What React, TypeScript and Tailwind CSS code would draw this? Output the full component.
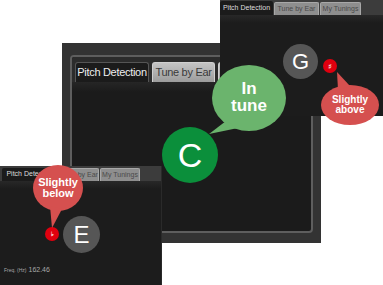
const font = { fontFamily: '"Liberation Sans", Arial, sans-serif' };

const Tab = ({ label, active, className }: any) => (
  <div
    className={
      active
        ? `flex items-center justify-center whitespace-nowrap tracking-[-0.3px] rounded-t-[3px] bg-[#1b1b1b] text-[#eeeeee] border border-b-0 border-[#555] ${className}`
        : `flex items-center justify-center whitespace-nowrap tracking-[-0.3px] rounded-t-[3px] bg-gradient-to-b from-[#c4c4c4] to-[#9c9c9c] text-[#3a3a3a] border border-b-0 border-[#d0d0d0] ${className}`
    }
  >
    {label}
  </div>
);

const SmallTab = ({ label, active, className }: any) => (
  <div
    className={
      active
        ? `flex items-center justify-center whitespace-nowrap rounded-t-[2px] bg-[#1b1b1b] text-[#dddddd] ${className}`
        : `flex items-center justify-center whitespace-nowrap rounded-t-[2px] bg-[#8e8e8e] text-[#4a4a4a] border border-b-0 border-[#a8a8a8] ${className}`
    }
  >
    {label}
  </div>
);

const MiddleWindow = () => (
  <div className="absolute left-[62px] top-[43px] w-[259px] h-[200px] bg-[#333333] pt-[12px] pl-[8px] pr-[8px] pb-[10px]">
    <div className="h-full rounded-[4px] border-2 border-[#5e5e5e] bg-[#1b1b1b] flex flex-col overflow-hidden">
      <div className="h-[25px] bg-[#2c2c2c] flex items-end gap-[3px] pl-[3px] shrink-0">
        <Tab label="Pitch Detection" active className="w-[74px] h-[20px] text-[11px]" />
        <Tab label="Tune by Ear" className="w-[63px] h-[20px] text-[11px]" />
        <Tab label="My Tunings" className="w-[63px] h-[20px] text-[11px]" />
      </div>
      <div className="h-[10px] bg-gradient-to-b from-[#262626] to-[#1b1b1b]" />
      <div className="flex-1" />
    </div>
  </div>
);

const TopRightWindow = () => (
  <div className="absolute left-[220px] top-0 w-[163px] h-[116px] bg-[#1c1c1c] flex flex-col">
    <div className="h-[15px] bg-[#3c3c3c] flex items-end gap-[1px] shrink-0">
      <SmallTab label="Pitch Detection" active className="w-[53px] h-[14px] text-[7px]" />
      <SmallTab label="Tune by Ear" className="w-[45px] h-[13px] text-[7px]" />
      <SmallTab label="My Tunings" className="w-[41px] h-[13px] text-[7px]" />
    </div>
    <div className="h-[8px] bg-gradient-to-b from-[#282828] to-[#1c1c1c]" />
  </div>
);

const BottomLeftWindow = () => (
  <div className="absolute left-0 top-[166px] w-[162px] h-[119px] bg-[#1c1c1c] flex flex-col border-r border-[#2a2a2a]">
    <div className="h-[15px] bg-[#3c3c3c] flex items-end gap-[1px] pl-[2px] shrink-0">
      <SmallTab label="Pitch Detection" active className="w-[56px] h-[13px] text-[7px]" />
      <SmallTab label="Tune by Ear" className="w-[40px] h-[13px] text-[7px]" />
      <SmallTab label="My Tunings" className="w-[40px] h-[13px] text-[7px]" />
    </div>
    <div className="h-[8px] bg-gradient-to-b from-[#282828] to-[#1c1c1c]" />
    <div className="mt-auto mb-[10px] ml-[4px] flex items-baseline gap-[2px] text-[#a8a8a8]">
      <span className="text-[5px]">Freq. (Hz)</span>
      <span className="text-[7px]">162.46</span>
    </div>
  </div>
);

const Note = ({ letter, className }: any) => (
  <div className={`absolute rounded-full flex items-center justify-center text-white ${className}`}>
    {letter}
  </div>
);

export default function App() {
  return (
    <div className="relative w-[383px] h-[285px] bg-white overflow-hidden" style={font}>
      <MiddleWindow />
      <TopRightWindow />
      <BottomLeftWindow />

      {/* note circles */}
      <Note letter="C" className="left-[162px] top-[127px] w-[56px] h-[56px] bg-[#0b8f3b] text-[34px] font-light" />
      <Note letter="G" className="left-[283px] top-[44px] w-[35px] h-[35px] bg-[#565656] text-[22px]" />
      <Note letter="E" className="left-[63px] top-[216px] w-[37px] h-[37px] bg-[#565656] text-[24px]" />

      {/* sharp / flat dots */}
      <div className="absolute left-[323px] top-[59px] w-[14px] h-[14px] rounded-full bg-[#e0000f] flex items-center justify-center text-white text-[6px] font-bold">♯</div>
      <div className="absolute left-[45px] top-[227px] w-[14px] h-[14px] rounded-full bg-[#e0000f] flex items-center justify-center text-white text-[6px] font-bold">♭</div>

      {/* bubbles */}
      <svg className="absolute left-0 top-0" width="383" height="285" viewBox="0 0 383 285">
        <ellipse cx="249" cy="98" rx="37" ry="33" fill="#6bb46d" />
        <path d="M226 121 L209 134 L238 128 Z" fill="#6bb46d" />
        <ellipse cx="350" cy="105" rx="29" ry="20" fill="#d5504f" />
        <path d="M338 90 L337 72 L350 86 Z" fill="#d5504f" />
        <ellipse cx="58" cy="188" rx="25" ry="23" fill="#d5504f" />
        <path d="M50 206 L52 228 L62 209 Z" fill="#d5504f" />
      </svg>

      <div className="absolute left-[212px] top-[80px] w-[74px] flex flex-col items-center text-white font-bold text-[17px] leading-[17px]">
        <span>In</span>
        <span>tune</span>
      </div>
      <div className="absolute left-[321px] top-[95px] w-[58px] flex flex-col items-center text-white font-bold text-[10px] leading-[10px]">
        <span>Slightly</span>
        <span>above</span>
      </div>
      <div className="absolute left-[33px] top-[177px] w-[50px] flex flex-col items-center text-white font-bold text-[11px] leading-[11px]">
        <span>Slightly</span>
        <span>below</span>
      </div>
    </div>
  );
}
